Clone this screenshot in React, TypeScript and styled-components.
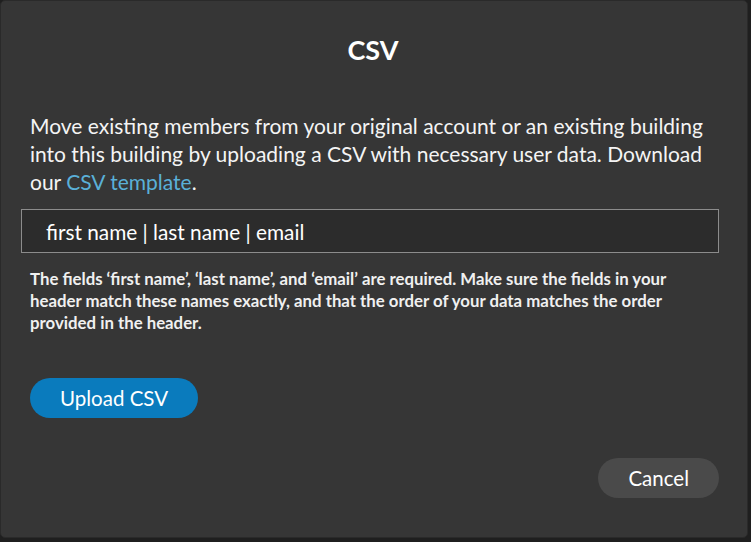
import React from 'react';
import styled, { createGlobalStyle } from 'styled-components';

const GlobalStyle = createGlobalStyle`
    html, body {
        margin: 0;
        padding: 0;
        background: #1f1f1f;
    }
    body {
        font-family: Lato, "Open Sans", sans-serif;
    }
`;

const Modal = styled.div`
    box-sizing: border-box;
    width: 748px;
    height: 538px;
    background: #363636;
    border: 1px solid #2a2a2a;
    border-radius: 5px;
    padding: 33px 28px 0 20px;
    display: flex;
    flex-direction: column;
    color: #fff;
`;

const Title = styled.h1`
    margin: 0;
    font-size: 27px;
    line-height: 32px;
    font-weight: 700;
    text-align: center;
    padding-left: 6px;
`;

const Intro = styled.p`
    margin: 46px 0 0;
    padding: 0 9px;
    font-size: 21px;
    line-height: 28px;
    font-weight: 400;
    color: #f4f4f4;
`;

const Link = styled.a`
    color: #5ab0d8;
    text-decoration: none;
`;

const HeaderField = styled.div`
    box-sizing: border-box;
    margin-top: 13px;
    height: 44px;
    border: 1px solid #8c8c8c;
    background: #2c2c2c;
    padding: 0 24px;
    display: flex;
    align-items: center;
    font-size: 20.8px;
    color: #fff;
`;

const Hint = styled.p`
    margin: 15px 0 0;
    padding: 0 9px;
    font-size: 16.8px;
    line-height: 22px;
    font-weight: 700;
    color: #f0f0f0;
`;

const Pill = styled.button<{ $tone: 'primary' | 'muted' }>`
    box-sizing: border-box;
    height: 40px;
    border: none;
    border-radius: 20px;
    font-family: Lato, "Open Sans", sans-serif;
    font-size: 20.5px;
    color: #fff;
    cursor: pointer;
    background: ${p => (p.$tone === 'primary' ? '#0a7bbd' : '#4a4a4a')};
    padding: ${p => (p.$tone === 'primary' ? '0 30px' : '0 30px')};
`;

const UploadRow = styled.div`
    margin-top: 44px;
    padding-left: 9px;
    display: flex;
`;

const Footer = styled.div`
    margin-top: 40px;
    display: flex;
    justify-content: flex-end;
`;

export default function App() {
    return (
        <>
            <GlobalStyle />
            <Modal>
                <Title>CSV</Title>
                <Intro>
                    Move existing members from your original account or an existing building
                    into this building by uploading a CSV with necessary user data. Download
                    our <Link href="#">CSV template</Link>.
                </Intro>
                <HeaderField>first name | last name | email</HeaderField>
                <Hint>
                    The fields ‘first name’, ‘last name’, and ‘email’ are required. Make sure the
                    fields in your header match these names exactly, and that the order of your
                    data matches the order provided in the header.
                </Hint>
                <UploadRow>
                    <Pill $tone="primary">Upload CSV</Pill>
                </UploadRow>
                <Footer>
                    <Pill $tone="muted">Cancel</Pill>
                </Footer>
            </Modal>
        </>
    );
}
